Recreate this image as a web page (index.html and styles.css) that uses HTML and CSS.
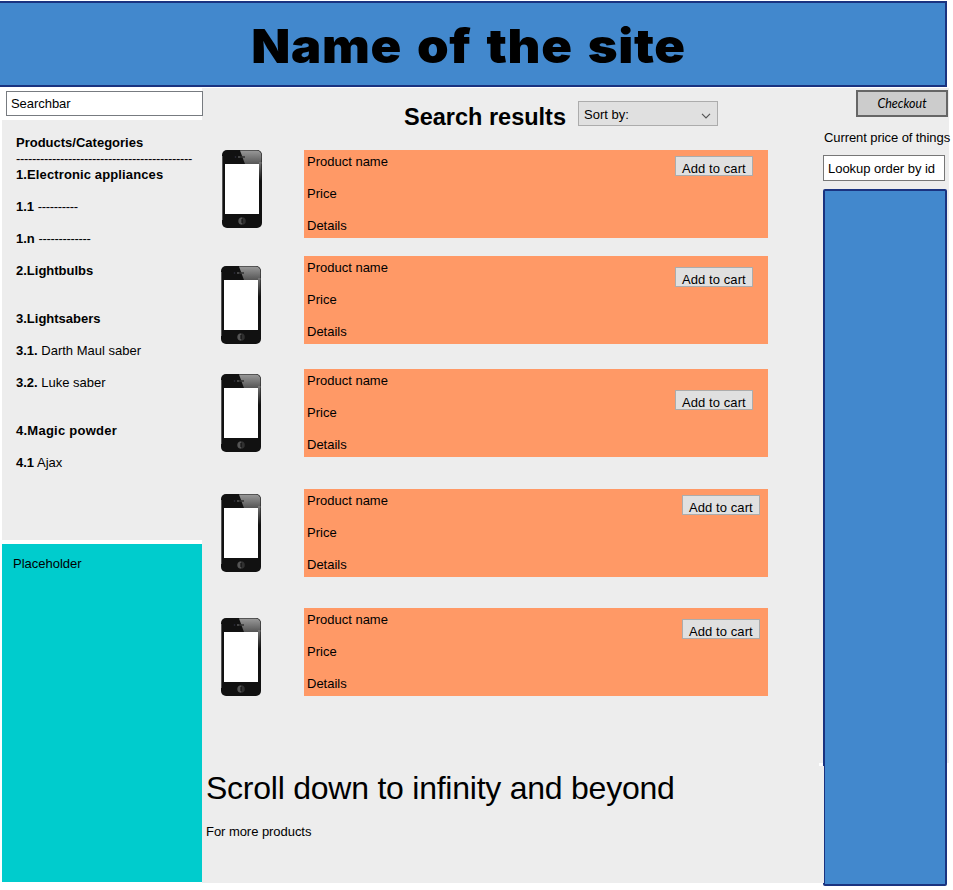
FILE: index.html
```
<!DOCTYPE html>
<html lang="en">
<head>
<meta charset="utf-8">
<title>Name of the site</title>
<link rel="stylesheet" href="styles.css">
</head>
<body>
<svg class="defs" width="0" height="0">
  <defs>
    <linearGradient id="shine" x1="0" y1="0" x2="0" y2="1"><stop offset="0" stop-color="#999"/><stop offset="1" stop-color="#555"/></linearGradient>
    <linearGradient id="edge" x1="0" y1="0" x2="0" y2="1"><stop offset="0" stop-color="#777"/><stop offset=".5" stop-color="#111"/></linearGradient>
    <symbol id="phone" viewBox="0 0 40 78">
      <rect width="40" height="78" rx="5" fill="#111"/>
      <path d="M.5 6V70" stroke="#555" stroke-width="1"/>
      <path d="M18 .5H35Q39.500 1 39.500 6V14H23Z" fill="url(#shine)"/>
      <rect x="37" y="12" width="2.500" height="38" fill="url(#edge)"/>
      <path d="M16 7H23" stroke="#777"/><path d="M18 7H23" stroke="#111"/><circle cx="13.500" cy="7" r=".8" fill="#334"/>
      <rect x="3" y="14" width="34" height="50" fill="#fff"/>
      <circle cx="20" cy="71" r="3.800" fill="#303030"/><path d="M20 67.500A3.500 3.500 0 0 0 20 74.500Z" fill="#555"/><path d="M20 69V73" stroke="#090909"/>
    </symbol>
  </defs>
</svg>
<header class="banner"><h1>Name of the site</h1></header>
<div class="page">
  <aside class="left">
    <div class="search">Searchbar</div>
    <nav class="categories">
      <p><b>Products/Categories</b></p>
      <p class="dashes">--------------------------------------------</p>
      <p><b class="electronics">1.Electronic appliances</b></p>
      <p class="gap"><b>1.1</b> <span class="dashes">----------</span></p>
      <p class="gap"><b>1.n</b> <span class="dashes">-------------</span></p>
      <p class="gap"><b>2.Lightbulbs</b></p>
      <p class="wide-gap"><b>3.Lightsabers</b></p>
      <p class="gap"><b>3.1.</b> Darth Maul saber</p>
      <p class="gap"><b>3.2.</b> Luke saber</p>
      <p class="wide-gap"><b class="powder">4.Magic powder</b></p>
      <p class="gap"><b>4.1</b> Ajax</p>
    </nav>
    <div class="placeholder">Placeholder</div>
  </aside>
  <main class="results">
    <div class="toolbar"><h2>Search results</h2><div class="sort"><span>Sort by:</span><svg width="10" height="6" viewBox="0 0 10 6"><path d="M1 .8 5 4.800 9 .8" fill="none" stroke="#555" stroke-width="1.200"/></svg></div></div>
    <div class="product p1"><svg class="phone"><use href="#phone"/></svg><div class="card"><div class="info"><p>Product name</p><p>Price</p><p>Details</p></div><div class="add">Add to cart</div></div></div>
    <div class="product p2"><svg class="phone"><use href="#phone"/></svg><div class="card"><div class="info"><p>Product name</p><p>Price</p><p>Details</p></div><div class="add">Add to cart</div></div></div>
    <div class="product p3"><svg class="phone"><use href="#phone"/></svg><div class="card"><div class="info"><p>Product name</p><p>Price</p><p>Details</p></div><div class="add">Add to cart</div></div></div>
    <div class="product p4"><svg class="phone"><use href="#phone"/></svg><div class="card"><div class="info"><p>Product name</p><p>Price</p><p>Details</p></div><div class="add">Add to cart</div></div></div>
    <div class="product p5"><svg class="phone"><use href="#phone"/></svg><div class="card"><div class="info"><p>Product name</p><p>Price</p><p>Details</p></div><div class="add">Add to cart</div></div></div>
    <p class="scroll">Scroll down to infinity and beyond</p>
    <p class="more">For more products</p>
  </main>
  <aside class="right">
    <div class="checkout">Checkout</div>
    <p class="price">Current price of things</p>
    <div class="lookup">Lookup order by id</div>
    <div class="panel"></div>
  </aside>
</div>
</body>
</html>
```
FILE: styles.css
```
* { box-sizing: border-box; margin: 0; padding: 0; }
body { width: 953px; height: 890px; overflow: hidden; padding-top: 1px; background: #fff; color: #000; font: 13px/16px "Liberation Sans", Arial, sans-serif; white-space: nowrap; }
.defs { display: block; }
.banner { width: 947px; height: 86px; background: #4288cd; border: 2px solid #1a3380; border-left: 0; text-align: center; padding: 15px 8px 0 0; }
h1 { font: 900 47px/56px Inter, "Arial Black", sans-serif; letter-spacing: .6px; word-spacing: 4px; transform: scaleX(1.08); }
.page { display: grid; grid-template-columns: 200px 617px 130px; padding: 1px 0 0 2px; height: 798px; }
.left { display: flex; flex-direction: column; }
.search { width: 197px; height: 25px; margin: 3px 0 4px 4px; padding: 4px; background: #fff; border: 1px solid #777b80; position: relative; z-index: 1; letter-spacing: -.05px; }
.categories { height: 420px; background: #ededed; padding: 15px 14px; }
.categories .dashes { letter-spacing: -.33px; }
.electronics { letter-spacing: .12px; }
.powder { letter-spacing: .25px; }
.gap { margin-top: 16px; }
.wide-gap { margin-top: 32px; }
.placeholder { margin-top: 4px; height: 338px; background: #00cccd; padding: 12px 11px; }
.results { height: 795px; background: #ededed; margin-right: -5px; }
.toolbar { display: flex; height: 62px; padding: 13px 0 0 202px; }
h2 { font-size: 23.5px; line-height: 32px; width: 174px; }
.sort { width: 140px; height: 25px; background: #e0e0e0; border: 1px solid #acacac; padding: 5px 6px 0 5px; display: flex; justify-content: space-between; }
.sort svg { margin-top: 6px; }
.product { display: flex; height: 88px; }
.phone { display: block; width: 40px; height: 78px; margin-left: 19px; }
.card { width: 464px; height: 88px; margin-left: 43px; background: #ff9966; display: flex; justify-content: space-between; padding: 4px 15px 0 3px; }
.info p { height: 32px; }
.add { width: 78px; height: 20px; background: #e0e0e0; border: 1px solid #acacac; margin-top: 2px; padding: 4px 0 0 6px; line-height: 15px; letter-spacing: .08px; }
.p1 .phone { margin-left: 20px; }
.p1 .card { margin-left: 42px; }
.p2 { margin-top: 18px; }
.p2 .phone { margin-top: 10px; }
.p2 .add { margin-top: 7px; }
.p3 { margin-top: 25px; }
.p3 .phone { margin-top: 5px; }
.p3 .add { margin-top: 17px; }
.p4 { margin-top: 32px; }
.p4 .phone { margin-top: 5px; }
.p4 .card, .p5 .card { padding-right: 8px; }
.p5 { margin-top: 31px; }
.p5 .phone { margin-top: 10px; }
.p5 .add { margin-top: 7px; }
.scroll { font-size: 32px; line-height: 40px; padding: 72px 0 0 4px; letter-spacing: -.24px; }
.more { padding: 16px 0 0 4px; letter-spacing: -.05px; }
.right { height: 675px; background: #ededed; padding: 2px 0 0 4px; position: relative; z-index: 1; }
/* white notch where the right column's background ends */
.right::after { content: ""; position: absolute; left: 0; top: 675px; width: 5px; height: 3px; background: #fff; clip-path: polygon(0 0, 4px 0, 4px 3px, 0 3px); }
/* the panel border is thinner below the notch */
.panel::before { content: ""; position: absolute; left: 4px; top: 678px; width: 1px; height: 117px; background: #ededed; }
.checkout { width: 92px; height: 27px; margin-left: 33px; background: #ccc; border: 2px solid #666; text-align: center; font: italic 12.5px/23px "Comic Sans MS", Lato, cursive; }
.price { margin: 13px 0 9px 1px; letter-spacing: -.08px; }
.lookup { width: 122px; height: 26px; background: #fff; border: 1px solid #777; padding: 5px 4px; letter-spacing: -.04px; }
.panel { width: 124px; height: 697px; margin-top: 8px; background: #4288cd; border: 2px solid #1a3380; border-radius: 2px; }
```
